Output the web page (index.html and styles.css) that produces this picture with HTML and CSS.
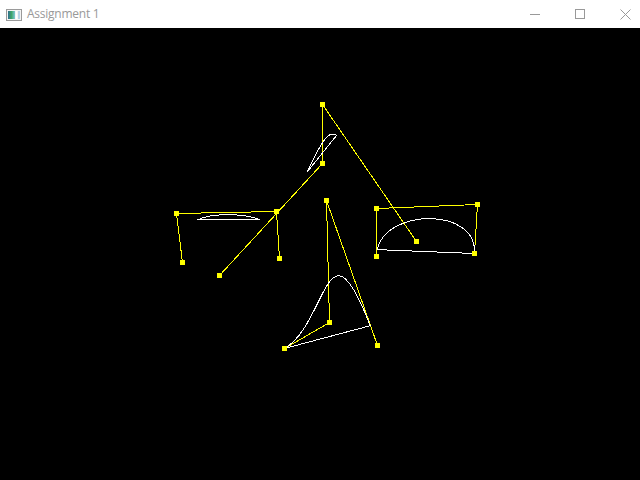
FILE: index.html
```html
<!DOCTYPE html>
<html>
<head>
<meta charset="utf-8">
<title>Assignment 1</title>
<link rel="stylesheet" href="styles.css">
</head>
<body>
<div class="window">
  <header class="titlebar">
    <div class="title-left">
      <svg class="app-icon" width="16" height="12" viewBox="0 0 16 12">
        <defs>
          <linearGradient id="ig" x1="0" y1="0" x2="1" y2="0">
            <stop offset="0" stop-color="#2f6f8f"/>
            <stop offset="0.5" stop-color="#3fa56a"/>
            <stop offset="1" stop-color="#7fc7d8"/>
          </linearGradient>
        </defs>
        <rect x="0.5" y="0.5" width="15" height="11" fill="#f4f4f4" stroke="#9a9a9a"/>
        <rect x="2" y="2" width="7" height="8" fill="url(#ig)"/>
        <rect x="10" y="2" width="1" height="8" fill="#ffffff"/>
        <rect x="12" y="2" width="2" height="8" fill="#b9d3e6"/>
      </svg>
      <span class="title-text">Assignment 1</span>
    </div>
    <div class="controls">
      <svg class="ctl" width="10" height="10" viewBox="0 0 10 10"><path d="M0 5.5H10" stroke="#999" stroke-width="1"/></svg>
      <svg class="ctl" width="10" height="10" viewBox="0 0 10 10"><rect x="0.5" y="0.5" width="9" height="9" fill="none" stroke="#999" stroke-width="1"/></svg>
      <svg class="ctl" width="11" height="11" viewBox="0 0 11 11"><path d="M0.5 0.5L10.5 10.5M10.5 0.5L0.5 10.5" stroke="#999" stroke-width="1"/></svg>
    </div>
  </header>
  <main class="canvas">
    <svg class="scene" width="640" height="452" viewBox="0 28 640 452">
      <g class="lines" transform="translate(0.5,0.5)">
        <polyline points="416,241 322,104 322,163 219,275"/>
        <polyline points="182,262 176,213 276,211 279,258"/>
        <polyline points="474,253 477,204 376,208 376,256"/>
        <polyline points="284,348 329,322 326,200 377,345"/>
      </g>
      <g class="curves" transform="translate(0.5,0.5)">
        <path d="M307,171 C316,152 327,127 336,135 Z"/>
        <path d="M197,219.5 C210,212.5 242,212.5 259,219 Z"/>
        <path d="M474,253 C476.85,206.45 385.84,207.73 376.73,249.13 Z"/>
        <path d="M284,348 C326.75,323.3 326.18,211.96 369.75,325.21 Z"/>
      </g>
      <g class="points">
        <rect x="320" y="102" width="5" height="5"/>
        <rect x="320" y="161" width="5" height="5"/>
        <rect x="414" y="239" width="5" height="5"/>
        <rect x="217" y="273" width="5" height="5"/>
        <rect x="174" y="211" width="5" height="5"/>
        <rect x="274" y="209" width="5" height="5"/>
        <rect x="277" y="256" width="5" height="5"/>
        <rect x="180" y="260" width="5" height="5"/>
        <rect x="472" y="251" width="5" height="5"/>
        <rect x="475" y="202" width="5" height="5"/>
        <rect x="374" y="206" width="5" height="5"/>
        <rect x="374" y="254" width="5" height="5"/>
        <rect x="282" y="346" width="5" height="5"/>
        <rect x="327" y="320" width="5" height="5"/>
        <rect x="324" y="198" width="5" height="5"/>
        <rect x="375" y="343" width="5" height="5"/>
      </g>
    </svg>
  </main>
</div>
</body>
</html>
```

FILE: styles.css
```css
html, body {
  margin: 0;
  padding: 0;
  background: #000;
}

.window {
  width: 640px;
  height: 480px;
  display: flex;
  flex-direction: column;
  overflow: hidden;
}

.titlebar {
  height: 28px;
  flex: 0 0 28px;
  background: #ffffff;
  display: flex;
  align-items: center;
  justify-content: space-between;
}

.title-left {
  display: flex;
  align-items: center;
  padding-left: 6px;
  gap: 5px;
}

.app-icon {
  display: block;
  margin-top: 1px;
}

.title-text {
  font-family: "Open Sans", "Noto Sans", "DejaVu Sans", sans-serif;
  font-size: 12px;
  letter-spacing: -0.25px;
  color: #999999;
  line-height: 16px;
  margin-top: -1px;
}

.controls {
  display: flex;
  align-items: center;
  gap: 35px;
  padding-right: 9px;
}

.ctl {
  display: block;
}

.canvas {
  flex: 1;
  background: #000;
}

.scene {
  display: block;
}

.lines polyline {
  fill: none;
  stroke: #ffff00;
  stroke-width: 1;
  shape-rendering: crispEdges;
}

.curves path {
  fill: none;
  stroke: #ffffff;
  stroke-width: 1;
  shape-rendering: crispEdges;
}

.points rect {
  fill: #ffff00;
}
```
